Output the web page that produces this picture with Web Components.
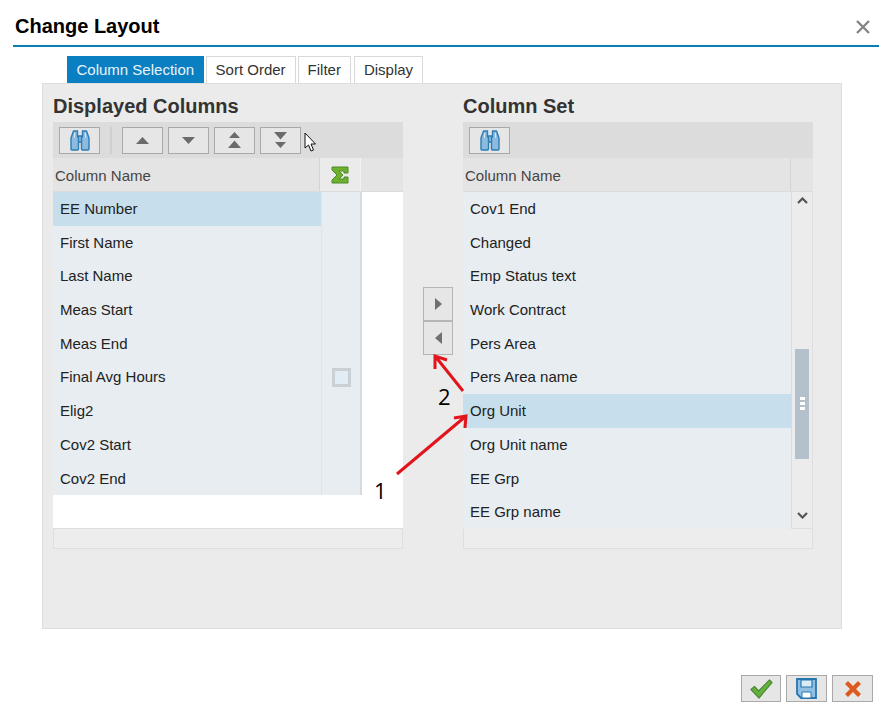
<!DOCTYPE html>
<html lang="en">
<head>
<meta charset="utf-8">
<title>Change Layout</title>
<style>
  html, body { margin: 0; background: #fff; font-family: "Liberation Sans", Arial, sans-serif; }
</style>
</head>
<body>
<layout-dialog heading="Change Layout">
  <tab-strip>
    <tab-item active>Column Selection</tab-item>
    <tab-item>Sort Order</tab-item>
    <tab-item>Filter</tab-item>
    <tab-item>Display</tab-item>
  </tab-strip>
  <tab-panel>
    <col-table heading="Displayed Columns" list-width="309" sum>
      <tool-btn slot="tools" icon="find"></tool-btn>
      <tool-sep slot="tools"></tool-sep>
      <tool-btn slot="tools" icon="up"></tool-btn>
      <tool-btn slot="tools" icon="down"></tool-btn>
      <tool-btn slot="tools" icon="top"></tool-btn>
      <tool-btn slot="tools" icon="bottom"></tool-btn>
      <col-row sum selected>EE Number</col-row>
      <col-row sum>First Name</col-row>
      <col-row sum>Last Name</col-row>
      <col-row sum>Meas Start</col-row>
      <col-row sum>Meas End</col-row>
      <col-row sum check>Final Avg Hours</col-row>
      <col-row sum>Elig2</col-row>
      <col-row sum>Cov2 Start</col-row>
      <col-row sum>Cov2 End</col-row>
    </col-table>
    <move-btns>
      <tool-btn icon="right" narrow></tool-btn>
      <tool-btn icon="left" narrow></tool-btn>
    </move-btns>
    <col-table heading="Column Set" list-width="328">
      <tool-btn slot="tools" icon="find"></tool-btn>
      <col-row>Cov1 End</col-row>
      <col-row>Changed</col-row>
      <col-row>Emp Status text</col-row>
      <col-row>Work Contract</col-row>
      <col-row>Pers Area</col-row>
      <col-row>Pers Area name</col-row>
      <col-row selected>Org Unit</col-row>
      <col-row>Org Unit name</col-row>
      <col-row>EE Grp</col-row>
      <col-row>EE Grp name</col-row>
      <v-scroll slot="side"></v-scroll>
    </col-table>
  </tab-panel>
  <tool-btn slot="footer" icon="ok" wide40></tool-btn>
  <tool-btn slot="footer" icon="save"></tool-btn>
  <tool-btn slot="footer" icon="cancel"></tool-btn>
</layout-dialog>

<script>
  const ICONS = {
    // two barrels and a bridge
    find: '<svg width="20" height="21" viewBox="0 0 20 21"><g fill="#8dbbdf" stroke="#2b7db3" stroke-width="1.400" stroke-linejoin="round"><path d="M8 6h4v6H8z"/><path d="M3.500 1h4v6h1v12q0 1-1 1H2q-1 0-1-1V8z"/><path d="M12.500 1h4L19 8v11q0 1-1 1h-5.500q-1 0-1-1V7h1z"/></g><path d="M4.500 3v5M15.500 3v5" stroke="#d5e6f3" stroke-width="1"/></svg>',
    up: '<svg width="13" height="7" viewBox="0 0 13 7"><path d="M6.500 0L13 7H0z" fill="#6b6b6b"/></svg>',
    down: '<svg width="13" height="7" viewBox="0 0 13 7"><path d="M0 0h13L6.500 7z" fill="#6b6b6b"/></svg>',
    top: '<svg width="13" height="16" viewBox="0 0 13 16"><path d="M6.500 0L12 6H1zM6.500 8.500L13 16H0z" fill="#6b6b6b"/></svg>',
    bottom: '<svg width="13" height="16" viewBox="0 0 13 16"><path d="M0 0h13L6.500 7.500zM1 10h11l-5.500 6z" fill="#6b6b6b"/></svg>',
    right: '<svg width="7" height="12" viewBox="0 0 7 12"><path d="M0 0l7 6-7 6z" fill="#707070"/></svg>',
    left: '<svg width="7" height="12" viewBox="0 0 7 12"><path d="M7 0L0 6l7 6z" fill="#707070"/></svg>',
    ok: '<svg width="23" height="20" viewBox="0 0 23 20"><path d="M1 10.500l3.500-3 4 4.500L19.500 1 22 3.500 9 19z" fill="#68b13c" stroke="#4b8a3a" stroke-width="1.200" stroke-linejoin="round"/></svg>',
    save: '<svg width="21" height="21" viewBox="0 0 21 21"><path d="M1 1h19v19H5l-4-4z" fill="#8fc0e4" stroke="#2777ad" stroke-width="1.800"/><path d="M5 2h11v7H5z" fill="#dcecf7" stroke="#2777ad" stroke-width="1.200"/><path d="M6 14h9v6H6z" fill="#fff" stroke="#2777ad" stroke-width="1"/></svg>',
    cancel: '<svg width="16" height="16" viewBox="0 0 16 16"><path d="M3 0l5 5 5-5 3 3-5 5 5 5-3 3-5-5-5 5-3-3 5-5-5-5z" fill="#dd5a1f"/></svg>'
  };

  class LayoutDialog extends HTMLElement {
    constructor() {
      super();
      this.attachShadow({ mode: 'open' });
    }
    connectedCallback() {
      this.shadowRoot.innerHTML = `
        <style>
          :host { display: block; position: relative; width: 892px; height: 710px; overflow: hidden; }
          header { display: flex; justify-content: space-between; align-items: center; height: 45px; margin: 0 13px; border-bottom: 2px solid #0b7fb3; box-sizing: content-box; }
          h1 { margin: 7px 0 0 2px; font-size: 20px; font-weight: bold; color: #000; }
          .close { display: block; margin: 9px 9px 0 0; }
          .content { padding-left: 42px; padding-top: 9px; }
          footer { display: flex; justify-content: flex-end; gap: 5px; padding: 46px 19px 0 0; }
          .overlay { position: absolute; left: 0; top: 0; pointer-events: none; }
          .num { position: absolute; font: 22px "Open Sans", sans-serif; color: #000; line-height: 1; }
        </style>
        <header>
          <h1>${this.getAttribute('heading')}</h1>
          <svg class="close" width="14" height="14" viewBox="0 0 14 14"><path d="M1 1l12 12M13 1L1 13" stroke="#858585" stroke-width="2.400"/></svg>
        </header>
        <div class="content"><slot></slot></div>
        <footer><slot name="footer"></slot></footer>
        <svg class="overlay" width="892" height="710" viewBox="0 0 892 710">
          <g fill="none" stroke="#e2141c" stroke-width="3">
            <path d="M397 474L466 416M454 418L466 416L465 428"/>
            <path d="M463 391L435 356M435 369L435 356L447 360"/>
          </g>
          <path d="M305 133v15l3.500-3 2.500 6 2.500-1-2.500-6h4.500z" fill="#fff" stroke="#111" stroke-width="1"/>
        </svg>
        <span class="num" style="left:374px;top:479px">1</span>
        <span class="num" style="left:438px;top:385px">2</span>
      `;
    }
  }

  class TabStrip extends HTMLElement {
    constructor() {
      super();
      this.attachShadow({ mode: 'open' }).innerHTML = `
        <style>:host { display: flex; gap: 2px; padding-left: 25px; height: 27px; }</style>
        <slot></slot>`;
    }
  }

  class TabItem extends HTMLElement {
    constructor() {
      super();
      this.attachShadow({ mode: 'open' }).innerHTML = `
        <style>
          :host { display: flex; align-items: center; padding: 0 9px 2px; font-size: 15px; color: #333; background: #fff; border: 1px solid #d9d9d9; border-bottom: 0; box-sizing: border-box; }
          :host([active]) { padding: 0 8.500px 2px; background: #0a7fc1; border-color: #0a7fc1; color: #eaf4fa; }
          :host(:last-child) { margin-left: 1px; }
        </style>
        <slot></slot>`;
    }
  }

  class TabPanel extends HTMLElement {
    constructor() {
      super();
      this.attachShadow({ mode: 'open' }).innerHTML = `
        <style>
          :host { display: flex; width: 800px; height: 546px; box-sizing: border-box; padding-left: 10px; background: #ebebeb; border: 1px solid #dedede; }
        </style>
        <slot></slot>`;
    }
  }

  class ColTable extends HTMLElement {
    constructor() {
      super();
      this.attachShadow({ mode: 'open' });
    }
    connectedCallback() {
      const w = this.getAttribute('list-width');
      const sum = this.hasAttribute('sum');
      this.shadowRoot.innerHTML = `
        <style>
          :host { display: block; width: 350px; flex: none; }
          h2 { margin: 0; height: 38px; line-height: 44px; font-size: 20px; font-weight: bold; color: #333; white-space: nowrap; }
          .tools { display: flex; align-items: center; gap: 5px; height: 36px; padding-left: 6px; background: #dcdcdc; box-sizing: border-box; }
          .head { display: flex; height: 34px; background: #e4e4e4; font-size: 15px; color: #444; border-bottom: 1px solid #dcdcdc; box-sizing: border-box; }
          .head .name { width: ${sum ? 267 : w}px; padding-left: 2px; box-sizing: border-box; line-height: 35px; border-right: 1px solid #d4d4d4; }
          .head .sum { width: 41px; display: flex; align-items: center; justify-content: center; background: #ebebeb; border-right: 1px solid #f3f3f3; box-sizing: border-box; }
          .body { display: flex; height: 336px; background: ${sum ? '#fff' : '#ececec'}; }
          .list { width: ${w}px; flex: none; background: ${sum ? '#fff' : '#e7edf1'}; border-right: ${sum ? 0 : 1}px solid #d8dcde; }
          .side { flex: 1; }
          .foot { height: 21px; background: #ededed; border: 1px solid #dedede; box-sizing: border-box; }
        </style>
        <h2>${this.getAttribute('heading')}</h2>
        <div class="tools"><slot name="tools"></slot></div>
        <div class="head">
          <div class="name">Column Name</div>
          ${sum ? `<div class="sum"><svg width="18" height="18" viewBox="0 0 18 18"><path d="M1 1h16v6h-4V5H8l4 4-4 4h5v-2h4v6H1v-3l5-5-5-5z" fill="#6fb02d" stroke="#4c8a2a" stroke-width="1"/></svg></div>` : ''}
        </div>
        <div class="body">
          <div class="list"><slot></slot></div>
          <div class="side"><slot name="side"></slot></div>
        </div>
        <div class="foot"></div>`;
    }
  }

  class ColRow extends HTMLElement {
    constructor() {
      super();
      this.attachShadow({ mode: 'open' });
    }
    connectedCallback() {
      const sum = this.hasAttribute('sum');
      this.shadowRoot.innerHTML = `
        <style>
          :host { display: flex; height: 33.700px; font-size: 15px; color: #222; background: #e7edf1; }
          .name { flex: 1; padding-left: 7px; line-height: 33px; white-space: nowrap; }
          :host([selected]) .name { background: #c7dfec; }
          .sum { width: 41px; flex: none; display: flex; align-items: center; justify-content: center; box-sizing: border-box; border-left: 1px solid #dfe4e7; border-right: 2px solid #d6dadc; }
          .box { width: 19px; height: 19px; box-sizing: border-box; border: 3px solid #c9d1d7; background: #e2ecf5; }
        </style>
        <div class="name"><slot></slot></div>
        ${sum ? `<div class="sum">${this.hasAttribute('check') ? '<div class="box"></div>' : ''}</div>` : ''}`;
    }
  }

  class ToolBtn extends HTMLElement {
    constructor() {
      super();
      this.attachShadow({ mode: 'open' });
    }
    connectedCallback() {
      this.shadowRoot.innerHTML = `
        <style>
          :host { display: flex; align-items: center; justify-content: center; width: 41px; height: 27px; flex: none; box-sizing: border-box; background: #e6e6e6; border: 1px solid #a9a9a9; }
          :host([narrow]) { width: 30px; height: 34px; border-color: #b5b5b5; }
          :host([wide40]) { width: 40px; }
        </style>
        ${ICONS[this.getAttribute('icon')]}`;
    }
  }

  class ToolSep extends HTMLElement {
    constructor() {
      super();
      this.attachShadow({ mode: 'open' }).innerHTML = `
        <style>:host { display: block; width: 2px; height: 27px; margin: 0 5px; background: #cfcfcf; }</style>`;
    }
  }

  class MoveBtns extends HTMLElement {
    constructor() {
      super();
      this.attachShadow({ mode: 'open' }).innerHTML = `
        <style>:host { display: flex; flex-direction: column; width: 60px; flex: none; box-sizing: border-box; padding: 203px 0 0 20px; }</style>
        <slot></slot>`;
    }
  }

  class VScroll extends HTMLElement {
    constructor() {
      super();
      this.attachShadow({ mode: 'open' }).innerHTML = `
        <style>
          :host { display: flex; flex-direction: column; align-items: center; height: 336px; box-sizing: border-box; padding-top: 5px; border-right: 1px solid #dedede; }
          svg { display: block; flex: none; }
          .thumb { display: flex; flex-direction: column; align-items: center; justify-content: center; gap: 2px; width: 14px; height: 110px; margin-top: 145px; background: #b4c0cc; padding-bottom: 1px; box-sizing: border-box; }
          .thumb i { display: block; width: 5px; height: 3px; background: #fff; }
          .dn { margin-top: 53px; }
        </style>
        <svg width="11" height="7" viewBox="0 0 11 7"><path d="M1 6l4.500-4.500L10 6" fill="none" stroke="#555" stroke-width="2.200"/></svg>
        <div class="thumb"><i></i><i></i><i></i></div>
        <svg class="dn" width="11" height="7" viewBox="0 0 11 7"><path d="M1 1l4.500 4.500L10 1" fill="none" stroke="#555" stroke-width="2.200"/></svg>`;
    }
  }

  customElements.define('layout-dialog', LayoutDialog);
  customElements.define('tab-strip', TabStrip);
  customElements.define('tab-item', TabItem);
  customElements.define('tab-panel', TabPanel);
  customElements.define('col-table', ColTable);
  customElements.define('col-row', ColRow);
  customElements.define('tool-btn', ToolBtn);
  customElements.define('tool-sep', ToolSep);
  customElements.define('move-btns', MoveBtns);
  customElements.define('v-scroll', VScroll);
</script>
</body>
</html>
